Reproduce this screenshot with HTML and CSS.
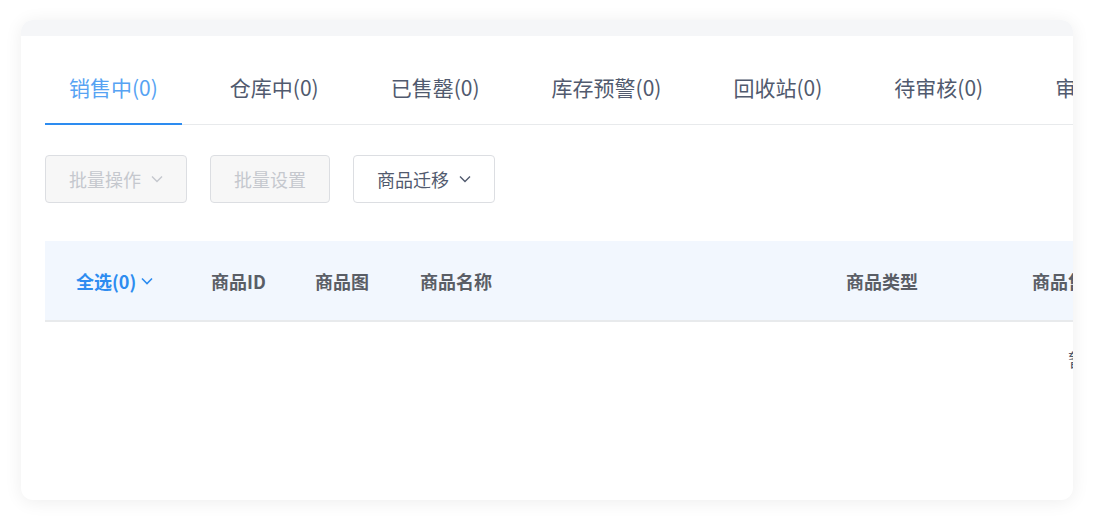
FILE: index.html
```html
<!DOCTYPE html>
<html lang="zh-CN">
<head>
    <meta charset="UTF-8">
    <meta name="viewport" content="width=device-width, initial-scale=1.0">
    <title>商品管理</title>
    <link rel="stylesheet" href="styles.css">
</head>
<body>
    <div class="card">
        <div class="card-top"></div>
        <div class="card-body">
            <div class="tabs">
                <div class="tab active">销售中(0)</div>
                <div class="tab">仓库中(0)</div>
                <div class="tab">已售罄(0)</div>
                <div class="tab">库存预警(0)</div>
                <div class="tab">回收站(0)</div>
                <div class="tab">待审核(0)</div>
                <div class="tab">审核未通过(0)</div>
            </div>

            <div class="toolbar">
                <button class="btn" disabled>批量操作
                    <svg class="chevron" viewBox="0 0 12 8"><path d="M1 1.5l5 5 5-5"/></svg>
                </button>
                <button class="btn" disabled>批量设置</button>
                <button class="btn">商品迁移
                    <svg class="chevron" viewBox="0 0 12 8"><path d="M1 1.5l5 5 5-5"/></svg>
                </button>
            </div>

            <div class="table">
                <div class="table-head">
                    <div class="th select-all">全选(0)
                        <svg class="chevron" viewBox="0 0 12 8"><path d="M1 1.5l5 5 5-5"/></svg>
                    </div>
                    <div class="th">商品ID</div>
                    <div class="th">商品图</div>
                    <div class="th">商品名称</div>
                    <div class="th">商品类型</div>
                    <div class="th">商品售价</div>
                    <div class="th">销量</div>
                    <div class="th">库存</div>
                    <div class="th">排序</div>
                    <div class="th">状态</div>
                    <div class="th">操作</div>
                </div>
                <div class="table-empty">暂无数据</div>
            </div>
        </div>
    </div>
</body>
</html>
```

FILE: styles.css
```css
body {
    margin: 0;
    padding: 20px 21px;
    background: #fff;
    font-family: "Noto Sans CJK SC", "Noto Sans", sans-serif;
    color: #515a6e;
}
.card {
    height: 480px;
    background: #fff;
    border-radius: 12px;
    box-shadow: 0 2px 18px rgba(0, 0, 0, 0.07);
    overflow: hidden;
}
.card-top {
    height: 16px;
    background: #f5f6f8;
}
.card-body {
    padding: 16px 0 0 24px;
}

/* tabs */
.tabs {
    display: flex;
    gap: 24px;
    border-bottom: 1px solid #e8eaec;
    white-space: nowrap;
}
.tab {
    flex-shrink: 0;
    height: 71px;
    line-height: 71px;
    padding: 0 24px;
    font-size: 21px;
    color: #515a6e;
    border-bottom: 2px solid transparent;
    margin-bottom: -1px;
}
.tab.active {
    color: #57a3f3;
    border-bottom-color: #2d8cf0;
}

/* buttons */
.toolbar {
    display: flex;
    gap: 23px;
    margin-top: 30px;
}
.btn {
    display: flex;
    align-items: center;
    gap: 10px;
    height: 48px;
    padding: 0 23px;
    background: #fff;
    border: 1px solid #dcdee2;
    border-radius: 4px;
    font-family: inherit;
    font-size: 18px;
    color: #515a6e;
    cursor: pointer;
}
.btn:disabled {
    background: #f7f7f7;
    color: #c5c8ce;
    cursor: not-allowed;
}
.chevron {
    width: 12px;
    height: 8px;
    fill: none;
    stroke: currentColor;
    stroke-width: 1.4;
}

/* table */
.table {
    width: 2118px;
    margin-top: 38px;
}
.table-head {
    display: grid;
    grid-template-columns: 135px 104px 105px 426px 186px 180px 140px 140px 140px 140px 1fr;
    align-items: center;
    height: 79px;
    padding-left: 31px;
    background: #f2f7fe;
    border-bottom: 2px solid #e8eaec;
}
.th {
    font-size: 18px;
    font-weight: bold;
    color: #5a5e66;
    white-space: nowrap;
}
.select-all {
    display: flex;
    align-items: center;
    gap: 5px;
    color: #2d8cf0;
}
.select-all .chevron {
    stroke-width: 1.6;
}
.table-empty {
    height: 74px;
    line-height: 74px;
    text-align: center;
    font-size: 18px;
    color: #515a6e;
}
```
